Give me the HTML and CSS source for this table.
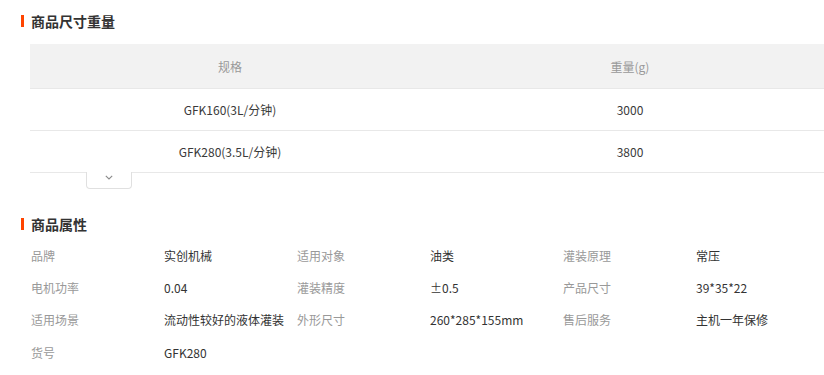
FILE: index.html
```html
<!DOCTYPE html>
<html lang="zh-CN">
<head>
<meta charset="utf-8">
<title>商品详情</title>
<link rel="stylesheet" href="styles.css">
</head>
<body>
<div class="page">
  <section class="sec sec-size">
    <h2 class="sec-title">商品尺寸重量</h2>
    <div class="size-table">
      <div class="tr th">
        <div class="td">规格</div>
        <div class="td">重量(g)</div>
      </div>
      <div class="tr">
        <div class="td">GFK160(3L/分钟)</div>
        <div class="td">3000</div>
      </div>
      <div class="tr">
        <div class="td">GFK280(3.5L/分钟)</div>
        <div class="td">3800</div>
      </div>
    </div>
    <div class="toggle">
      <svg class="chev" width="8" height="5" viewBox="0 0 8 5"><polyline points="0.8,0.8 4,4 7.2,0.8" fill="none" stroke="#8a8a8a" stroke-width="1.1"/></svg>
    </div>
  </section>

  <section class="sec sec-attr">
    <h2 class="sec-title">商品属性</h2>
    <div class="attr-grid">
      <div class="k">品牌</div><div class="v">实创机械</div>
      <div class="k">适用对象</div><div class="v">油类</div>
      <div class="k">灌装原理</div><div class="v">常压</div>

      <div class="k">电机功率</div><div class="v">0.04</div>
      <div class="k">灌装精度</div><div class="v">±0.5</div>
      <div class="k">产品尺寸</div><div class="v">39*35*22</div>

      <div class="k">适用场景</div><div class="v">流动性较好的液体灌装</div>
      <div class="k">外形尺寸</div><div class="v">260*285*155mm</div>
      <div class="k">售后服务</div><div class="v">主机一年保修</div>

      <div class="k">货号</div><div class="v">GFK280</div>
    </div>
  </section>
</div>
</body>
</html>
```
FILE: styles.css
```css
* { box-sizing: border-box; }
html, body {
  margin: 0;
  padding: 0;
  background: #fff;
  overflow: hidden;
}
body {
  font-family: "Noto Sans CJK SC", "Microsoft YaHei", sans-serif;
  font-size: 12px;
  color: #333;
}
.page {
  width: 840px;
}
.sec-title {
  margin: 0;
  height: 20px;
  line-height: 20px;
  font-size: 14px;
  font-weight: bold;
  color: #333;
  display: flex;
  align-items: center;
  padding-left: 21px;
}
.sec-title::before {
  content: "";
  width: 2.5px;
  height: 12px;
  background: #ff4400;
  margin-right: 7.5px;
}
.sec-size {
  padding-top: 11px;
}
.size-table {
  margin: 13px 0 0 30px;
  width: 800px;
}
.tr {
  display: flex;
  height: 42px;
  border-bottom: 1px solid #e8e8e8;
}
.tr.th {
  height: 45px;
  background: #f2f2f2;
}
.td {
  flex: 1;
  display: flex;
  align-items: center;
  justify-content: center;
  color: #3a3a3a;
}
.th .td { color: #999; }
.toggle {
  margin: -1px 0 0 86px;
  width: 46px;
  height: 17px;
  border: 1px solid #e0e0e0;
  border-top: none;
  border-radius: 0 0 4px 4px;
  background: #fff;
  position: relative;
  display: flex;
  justify-content: center;
  padding-top: 3px;
}
.chev { display: block; }
.sec-attr {
  padding-top: 25px;
}
.attr-grid {
  margin: 5px 0 0 31px;
  display: grid;
  grid-template-columns: repeat(6, 133px);
  grid-auto-rows: 32.4px;
  align-items: center;
}
.k { color: #999; }
.v { color: #333; }
```
